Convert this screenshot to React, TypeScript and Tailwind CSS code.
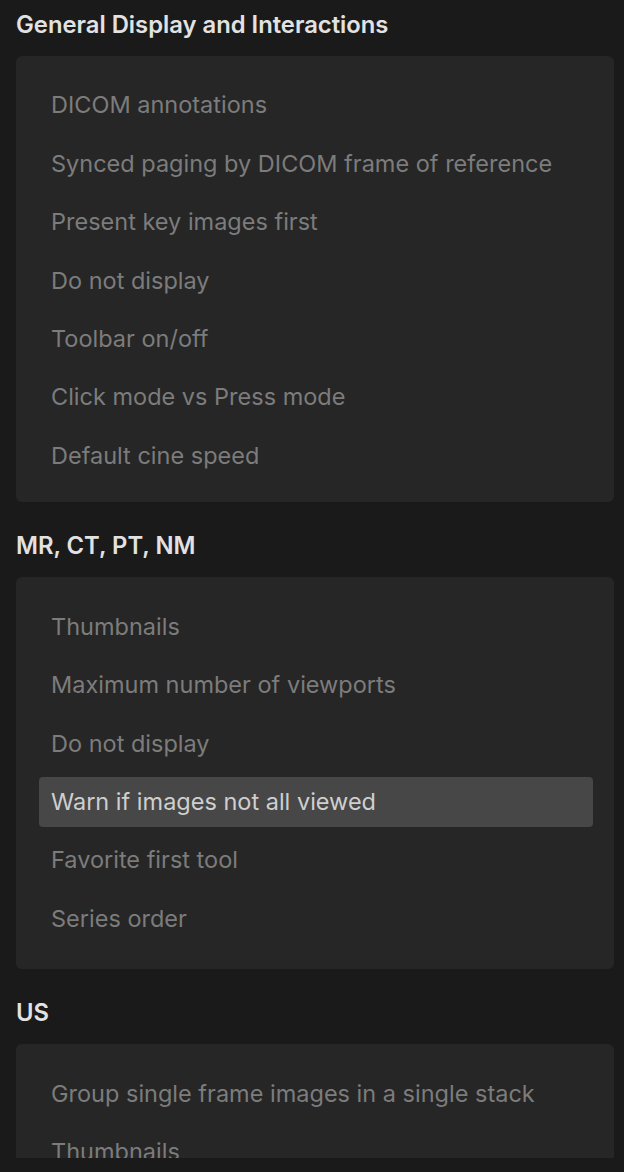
import React from "react";

const sections: { title: string; items: string[]; active?: number; pb: string }[] = [
  {
    title: "General Display and Interactions",
    items: [
      "DICOM annotations",
      "Synced paging by DICOM frame of reference",
      "Present key images first",
      "Do not display",
      "Toolbar on/off",
      "Click mode vs Press mode",
      "Default cine speed",
    ],
    pb: "pb-[22px]",
  },
  {
    title: "MR, CT, PT, NM",
    items: [
      "Thumbnails",
      "Maximum number of viewports",
      "Do not display",
      "Warn if images not all viewed",
      "Favorite first tool",
      "Series order",
    ],
    active: 3,
    pb: "pb-[26px]",
  },
  {
    title: "US",
    items: ["Group single frame images in a single stack", "Thumbnails"],
    pb: "pb-[24px]",
  },
];

export default function App() {
  return (
    <div
      className="w-[624px] h-[1172px] bg-[#1a1a1a] overflow-hidden"
      style={{ fontFamily: "Inter, 'Noto Sans', sans-serif" }}
    >
      <div className="h-[1158px] overflow-hidden pl-4 pr-[10px]">
        {sections.map((s, si) => (
          <div key={si} className={si === 0 ? "pt-[11px]" : "pt-[30px]"}>
            <h2 className="text-[23.8px] leading-[28px] font-semibold text-[#e2e2e2] mb-[17px]">{s.title}</h2>
            <div
              className={
                "bg-[#262626] rounded-[6px] pt-[24px] pl-[23px] pr-[21px] flex flex-col gap-[8.4px] " + s.pb
              }
            >
              {s.items.map((it, i) => (
                <div
                  key={i}
                  className={
                    "h-[50px] flex items-center px-3 rounded-[4px] text-[23.5px] " +
                    (s.active === i ? "bg-[#474747] text-[#cfcfcf]" : "text-[#7c7c7c]")
                  }
                >
                  {it}
                </div>
              ))}
            </div>
          </div>
        ))}
      </div>
    </div>
  );
}
